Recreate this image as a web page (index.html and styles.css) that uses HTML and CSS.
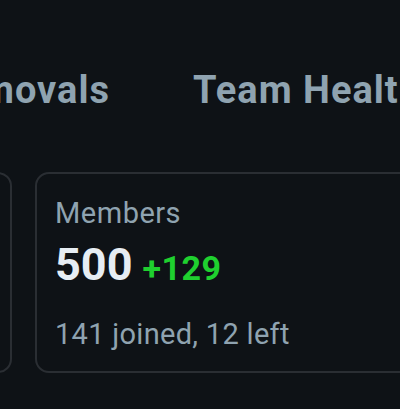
FILE: index.html
```html
<!DOCTYPE html>
<html lang="en">
<head>
  <meta charset="UTF-8">
  <meta name="viewport" content="width=device-width, initial-scale=1.0">
  <title>Insights</title>
  <link rel="stylesheet" href="styles.css">
</head>
<body>
  <div class="viewport">
    <!-- Section tabs -->
    <div class="tabs">
      <h2 class="tab tab-prev">Removals</h2>
      <h2 class="tab">Team Health</h2>
    </div>

    <!-- Stat cards -->
    <div class="cards">
      <div class="card"></div>
      <div class="card">
        <div class="card-label">Members</div>
        <div class="card-value">
          <span class="value">500</span>
          <span class="delta">+129</span>
        </div>
        <div class="card-note">141 joined, 12 left</div>
      </div>
    </div>
  </div>
</body>
</html>
```

FILE: styles.css
```css
html, body {
  margin: 0;
  padding: 0;
  background-color: #0e1216;
}
body {
  font-family: Roboto, "Noto Sans", sans-serif;
  width: 400px;
  height: 409px;
  overflow: hidden;
}
.viewport {
  width: 400px;
  overflow: hidden;
}
.tabs {
  display: flex;
  gap: 83px;
  margin-left: -200px;
  padding-top: 66px;
  white-space: nowrap;
}
.tab {
  margin: 0;
  font-size: 38px;
  font-weight: 700;
  line-height: 48px;
  letter-spacing: 1px;
  color: #8fa3b0;
}
.tab-prev {
  flex: 0 0 310px;
  text-align: right;
}
.cards {
  display: flex;
  gap: 23px;
  margin-left: -368px;
  margin-top: 58px;
}
.card {
  flex: 0 0 380px;
  box-sizing: border-box;
  height: 201px;
  border: 2px solid #2a2e33;
  border-radius: 14px;
  padding: 21px 18px;
}
.card-label {
  font-size: 29px;
  line-height: 36px;
  letter-spacing: 0.5px;
  color: #8fa3b0;
}
.card-value {
  display: flex;
  align-items: baseline;
  gap: 10px;
  margin-top: 8px;
}
.value {
  font-size: 45px;
  font-weight: 700;
  line-height: 52px;
  color: #e6edf3;
}
.delta {
  font-size: 34px;
  font-weight: 700;
  letter-spacing: 0.5px;
  color: #1fd02f;
}
.card-note {
  margin-top: 25px;
  font-size: 29px;
  line-height: 36px;
  letter-spacing: 0.3px;
  color: #8fa3b0;
}
```
